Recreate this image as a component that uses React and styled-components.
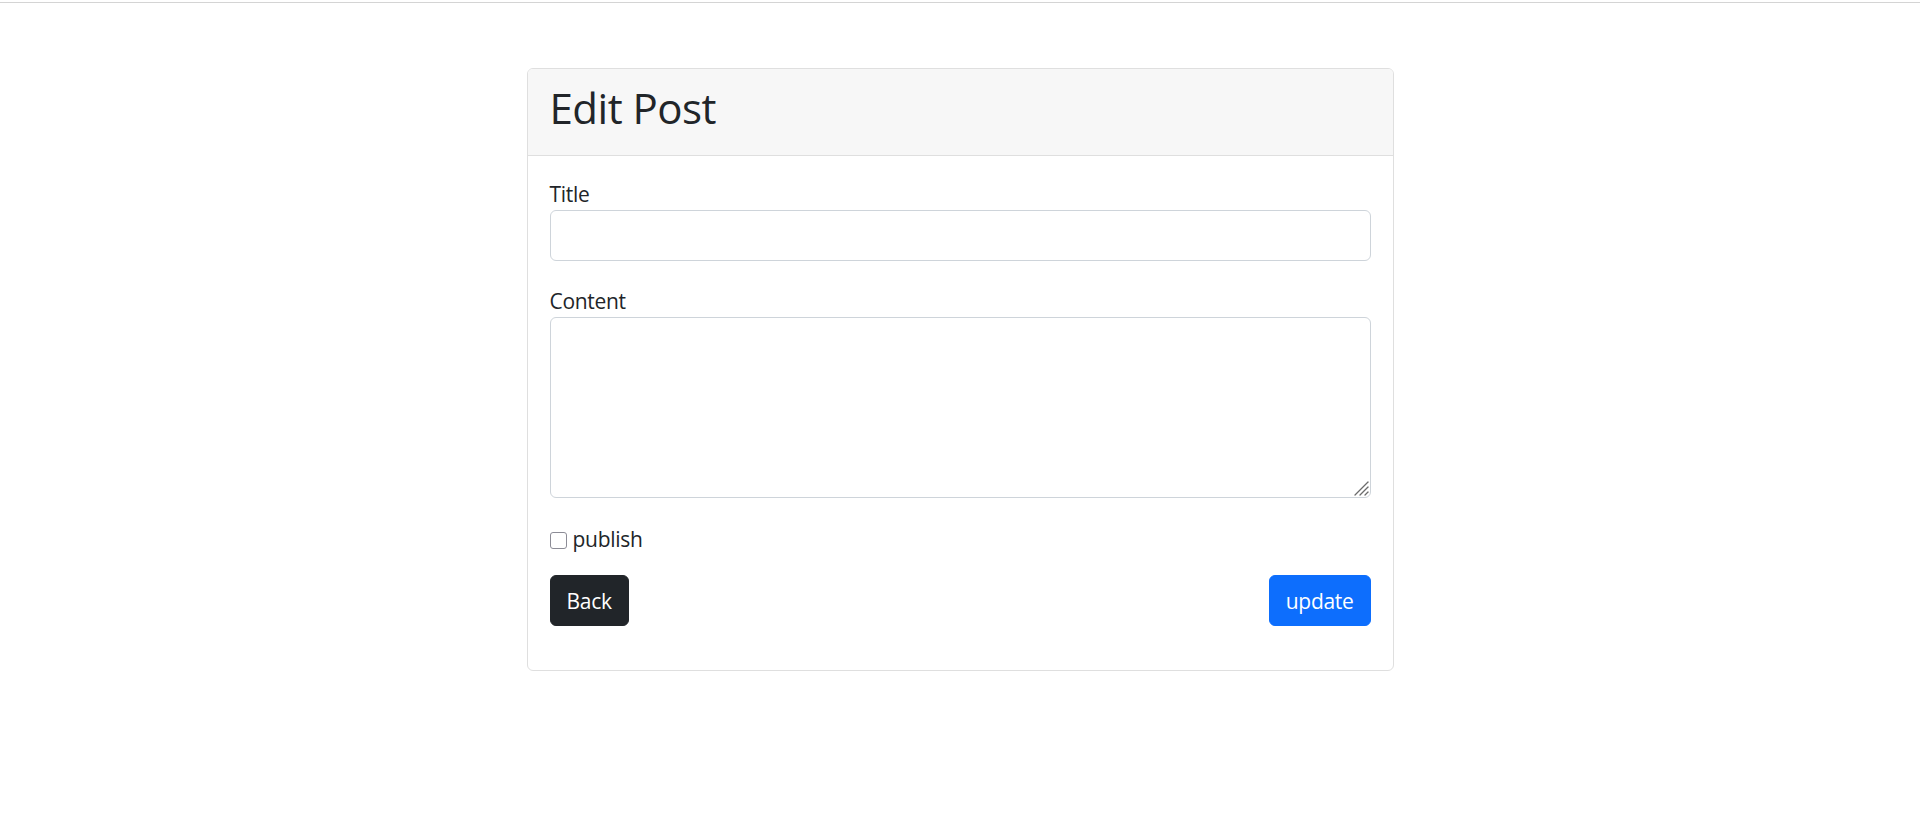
import React, { useState } from 'react';
import styled, { createGlobalStyle } from 'styled-components';

const GlobalStyle = createGlobalStyle`
  html, body {
    margin: 0;
    padding: 0;
    background: #ffffff;
  }
  body {
    font-family: 'Open Sans', 'Noto Sans', sans-serif;
    font-size: 21.33px;
    line-height: 1.5;
    color: #212529;
  }
  * {
    box-sizing: border-box;
  }
`;

const TopRule = styled.div`
  height: 1px;
  margin-top: 2px;
  background: #d4d4d4;
`;

const Page = styled.div`
  display: flex;
  justify-content: center;
  padding-top: 65px;
`;

const Card = styled.div`
  width: 867px;
  border: 1px solid #dfdfdf;
  border-radius: 6px;
  background: #fff;
  overflow: hidden;
`;

const CardHeader = styled.div`
  background: #f7f7f7;
  border-bottom: 1px solid #dfdfdf;
  padding: 14px 22px 22px;
`;

const Heading = styled.h1`
  margin: 0;
  font-size: 42px;
  font-weight: 400;
  line-height: 1.2;
  letter-spacing: -0.5px;
`;

const CardBody = styled.form`
  padding: 22px 22px 22px;
  display: flex;
  flex-direction: column;
`;

const Field = styled.div`
  display: flex;
  flex-direction: column;
  margin-bottom: ${(props) => props.$gap || '24px'};
`;

const Label = styled.label`
  font-size: 21px;
  line-height: 32px;
  letter-spacing: -0.3px;
`;

const Input = styled.input`
  height: 51px;
  width: 100%;
  border: 1px solid #ced4da;
  border-radius: 6px;
  padding: 8px 16px;
  font: inherit;
  color: #212529;
  outline: none;
`;

const TextAreaWrap = styled.div`
  position: relative;
  height: 181px;
`;

const TextArea = styled.textarea`
  display: block;
  height: 100%;
  width: 100%;
  border: 1px solid #ced4da;
  border-radius: 6px;
  padding: 8px 16px;
  font: inherit;
  color: #212529;
  outline: none;
  resize: none;
`;

const Grip = styled.svg`
  position: absolute;
  right: 2px;
  bottom: 2px;
  width: 17px;
  height: 17px;
  pointer-events: none;
`;

const CheckRow = styled.label`
  display: flex;
  align-items: center;
  gap: 6px;
  height: 32px;
  margin: 25px 0 20px;
  font-size: 21px;
  letter-spacing: -0.3px;
`;

const CheckBox = styled.input`
  appearance: none;
  width: 17px;
  height: 17px;
  margin: 3px 0 0 0;
  border: 1.5px solid #8c8c96;
  border-radius: 3px;
  background: #fff;
  &:checked {
    background: #0d6efd;
    border-color: #0d6efd;
  }
`;

const Actions = styled.div`
  display: flex;
  justify-content: space-between;
  align-items: center;
  margin-bottom: 22px;
`;

const Button = styled.button`
  height: 51px;
  padding: 0 16px;
  border: 1px solid ${(props) => (props.$variant === 'primary' ? '#0d6efd' : '#212529')};
  border-radius: 6px;
  background: ${(props) => (props.$variant === 'primary' ? '#0d6efd' : '#212529')};
  color: #fff;
  font-family: inherit;
  font-size: 21px;
  letter-spacing: -0.3px;
  cursor: pointer;
`;

const EditPost = () => {
  const [title, setTitle] = useState('');
  const [content, setContent] = useState('');
  const [publish, setPublish] = useState(false);

  return (
    <>
      <GlobalStyle />
      <TopRule />
      <Page>
        <Card>
          <CardHeader>
            <Heading>Edit Post</Heading>
          </CardHeader>
          <CardBody onSubmit={(e) => e.preventDefault()}>
            <Field>
              <Label htmlFor="title">Title</Label>
              <Input
                id="title"
                value={title}
                onChange={(e) => setTitle(e.target.value)}
              />
            </Field>
            <Field $gap="0">
              <Label htmlFor="content">Content</Label>
              <TextAreaWrap>
                <TextArea
                  id="content"
                  value={content}
                  onChange={(e) => setContent(e.target.value)}
                />
                <Grip viewBox="0 0 17 17">
                  <g stroke="#6b6b6b" strokeWidth="1.3" strokeLinecap="round">
                    <line x1="16" y1="3" x2="3" y2="16" />
                    <line x1="16" y1="8" x2="8" y2="16" />
                    <line x1="16" y1="13" x2="13" y2="16" />
                  </g>
                </Grip>
              </TextAreaWrap>
            </Field>
            <CheckRow>
              <CheckBox
                type="checkbox"
                checked={publish}
                onChange={(e) => setPublish(e.target.checked)}
              />
              publish
            </CheckRow>
            <Actions>
              <Button type="button">Back</Button>
              <Button type="submit" $variant="primary">
                update
              </Button>
            </Actions>
          </CardBody>
        </Card>
      </Page>
    </>
  );
};

export default EditPost;
